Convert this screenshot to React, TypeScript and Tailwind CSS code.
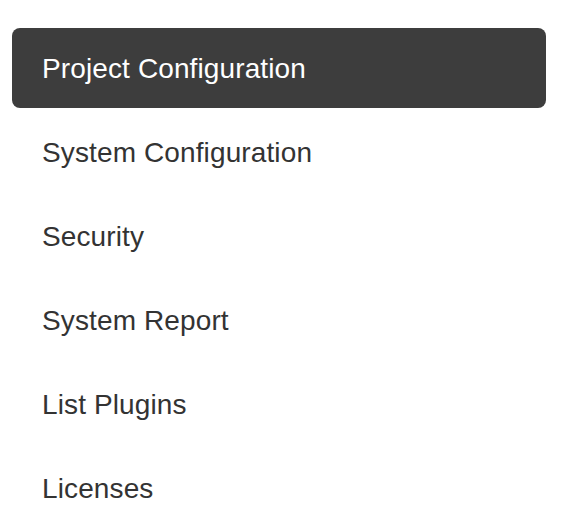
import React from "react";

const items = [
  "Project Configuration",
  "System Configuration",
  "Security",
  "System Report",
  "List Plugins",
  "Licenses",
];

export default function App() {
  return (
    <div className="min-h-screen bg-white pt-[28px] pl-[12px] pr-[16px]" style={{ fontFamily: '"Liberation Sans", Arial, sans-serif' }}>
      <ul className="flex flex-col gap-[4px]">
        {items.map((item, i) => (
          <li key={item}>
            <a
              className={
                i === 0
                  ? "block rounded-[8px] bg-[#3d3d3d] px-[30px] pt-[21px] pb-[19px] text-[28px] leading-[40px] tracking-[0.12px] text-white"
                  : "block rounded-[8px] px-[30px] pt-[21px] pb-[19px] text-[28px] leading-[40px] tracking-[0.12px] text-[#333333]"
              }
            >
              {item}
            </a>
          </li>
        ))}
      </ul>
    </div>
  );
}
